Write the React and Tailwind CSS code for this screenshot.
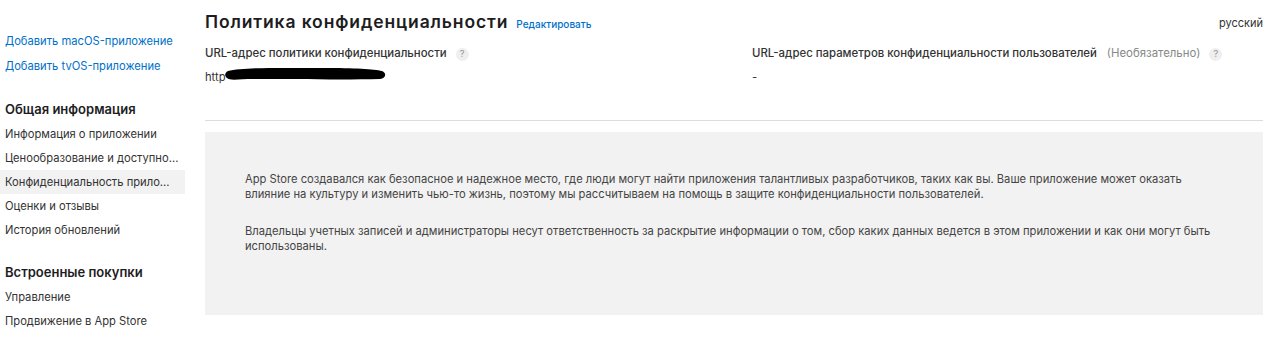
import React from 'react';

const font = { fontFamily: 'Inter, "Noto Sans", sans-serif' };

const SideLink = ({ children }) => (
  <div className="h-[25px] flex items-center px-[5px] text-[11.2px] text-[#0070c9]">{children}</div>
);

const SideItem = ({ children, active = false }) => (
  <div
    className={
      'h-[24px] flex items-center px-[5px] text-[11.2px] text-[#333] truncate ' +
      (active ? 'bg-[#f2f2f2]' : '')
    }
  >
    {children}
  </div>
);

const SideHeading = ({ children, className = '' }) => (
  <div className={'h-[24px] flex items-center px-[5px] text-[13px] font-semibold text-[#1d1d1f] ' + className}>
    {children}
  </div>
);

// little grey "?" bubble next to labels
const Help = () => (
  <span className="inline-flex items-center justify-center w-[13px] h-[13px] rounded-full bg-[#efefef] text-[9px] text-[#999] ml-[9px]">
    ?
  </span>
);

const Sidebar = () => (
  <div className="w-[185px] shrink-0 pt-[29px]">
    <SideLink>Добавить macOS-приложение</SideLink>
    <SideLink>Добавить tvOS-приложение</SideLink>

    <SideHeading className="mt-[19px]">Общая информация</SideHeading>
    <SideItem>Информация о приложении</SideItem>
    <SideItem>Ценообразование и доступно...</SideItem>
    <SideItem active>Конфиденциальность прило...</SideItem>
    <SideItem>Оценки и отзывы</SideItem>
    <SideItem>История обновлений</SideItem>

    <SideHeading className="mt-[19px]">Встроенные покупки</SideHeading>
    <SideItem>Управление</SideItem>
    <SideItem>Продвижение в App Store</SideItem>
  </div>
);

const Redacted = () => (
  <svg
    className="absolute left-[19px] top-[-4px]"
    width="164"
    height="18"
    viewBox="0 0 164 18"
  >
    <path
      d="M4 6 C20 2 60 3 100 3 C130 3 150 4 158 6 C163 8 162 13 156 14 C120 15 70 14 30 14 C15 14 6 16 3 13 C0 10 1 8 4 6 Z"
      fill="#000"
    />
  </svg>
);

function App() {
  return (
    <div className="flex w-full h-[361px] bg-white overflow-hidden" style={font}>
      <Sidebar />

      <div className="flex-1 pl-[20px] pr-[17px] pt-[10px]">
        <div className="flex items-center justify-between h-[24px]">
          <div className="flex items-baseline">
            <h1 className="text-[17.5px] font-semibold tracking-[0.05em] text-[#1d1d1f]">
              Политика конфиденциальности
            </h1>
            <span className="ml-[8px] text-[10px] font-medium text-[#0070c9]">Редактировать</span>
          </div>
          <span className="text-[11px] text-[#333] mt-[2px]">русский</span>
        </div>

        <div className="grid grid-cols-[547px_1fr] mt-[12px]">
          <div>
            <div className="h-[16px] flex items-center text-[11.4px] font-medium text-[#333]">
              URL-адрес политики конфиденциальности
              <Help />
            </div>
            <div className="h-[16px] mt-[7px] flex items-center text-[11.2px] text-[#333]">
              <span className="relative">
                http
                <Redacted />
              </span>
            </div>
          </div>
          <div>
            <div className="h-[16px] flex items-center text-[11.4px] font-medium text-[#333]">
              URL-адрес параметров конфиденциальности пользователей
              <span className="ml-[10px] font-normal text-[#888]">(Необязательно)</span>
              <Help />
            </div>
            <div className="h-[16px] mt-[7px] flex items-center text-[11.2px] text-[#333]">-</div>
          </div>
        </div>

        <div className="mt-[35px] border-t border-[#dcdcdc]" />

        <div className="mt-[11px] h-[183px] bg-[#f2f2f2] px-[40px] pt-[40px] text-[11.2px] leading-[15px] text-[#444]">
          <p className="max-w-[960px]">
            App Store создавался как безопасное и надежное место, где люди могут найти приложения талантливых
            разработчиков, таких как вы. Ваше приложение может оказать влияние на культуру и изменить чью-то
            жизнь, поэтому мы рассчитываем на помощь в защите конфиденциальности пользователей.
          </p>
          <p className="max-w-[990px] mt-[22px]">
            Владельцы учетных записей и администраторы несут ответственность за раскрытие информации о том, сбор
            каких данных ведется в этом приложении и как они могут быть использованы.
          </p>
        </div>
      </div>
    </div>
  );
}

export default App;
